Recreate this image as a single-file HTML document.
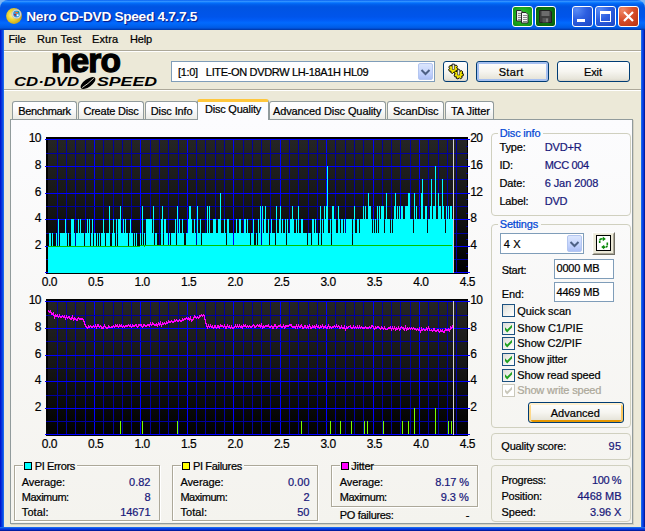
<!DOCTYPE html>
<html><head><meta charset="utf-8"><title>Nero CD-DVD Speed 4.7.7.5</title>
<style>
html,body{margin:0;padding:0;}
body{width:645px;height:531px;overflow:hidden;position:relative;background:#0831d9;font-family:"Liberation Sans",sans-serif;font-size:11px;color:#000;}
.abs,.chart,.al,.t,.gb,.btn,.cb,.tab{position:absolute;}
#title{position:absolute;left:0;top:0;width:645px;height:30px;border-radius:8px 8px 0 0;
 background:linear-gradient(to bottom,#0058ee 0%,#3593ff 4%,#288eff 6%,#127dff 8%,#036ffc 10%,#0262ee 14%,#0057e5 20%,#0054e3 24%,#0055eb 56%,#005bf5 66%,#026afe 76%,#0062ef 86%,#0058e2 93%,#0046c4 96.5%,#0034a0 100%);}
#corner-l,#corner-r{position:absolute;top:0;width:8px;height:8px;background:#7db5f3;}
#ttext{position:absolute;left:26.3px;top:9.2px;line-height:16px;color:#fff;font-weight:bold;font-size:13.7px;letter-spacing:-0.32px;text-shadow:1px 1px 1px #0a1883;white-space:nowrap;}
#frame{position:absolute;left:0;top:30px;width:645px;height:501px;
 background:linear-gradient(to right,#0019cf 0,#0019cf 1px,#0831d9 1px,#0831d9 2px,#0a48e2 2px,#0a48e2 3px,#1a68ee 3px,#1a68ee 4px,transparent 4px,transparent 641px,#1a68ee 641px,#1a68ee 642px,#0a48e2 642px,#0a48e2 643px,#0831d9 643px,#0831d9 644px,#001ea0 644px,#001ea0 645px);}
#fbot{position:absolute;left:0;top:527px;width:645px;height:4px;background:linear-gradient(to bottom,#1a68ee 0,#1a68ee 1px,#0a48e2 1px,#0a48e2 2px,#0831d9 2px,#0831d9 3px,#001ea0 3px,#001ea0 4px);}
#client{position:absolute;left:4px;top:30px;width:637px;height:497px;background:#ece9d8;}
.menu{position:absolute;top:33px;white-space:nowrap;}
.sepd{position:absolute;left:4px;width:637px;height:1px;background:#aca899;}
.sepl{position:absolute;left:4px;width:637px;height:1px;background:#fff;}
.tab{top:101px;height:18px;border:1px solid #919b9c;border-bottom:none;border-radius:3px 3px 0 0;background:linear-gradient(to bottom,#fff 0,#fcfcfe 40%,#ebebe5 100%);box-sizing:border-box;text-align:center;line-height:17px;white-space:nowrap;}
.tab.act{top:99px;height:21px;background:#fcfcfe;border-top:3px solid #ffc73c;line-height:15px;z-index:3;border-color:#919b9c;border-top-color:#ffc73c;}
#page{position:absolute;left:10px;top:119px;width:623px;height:405px;box-sizing:border-box;border:1px solid #919b9c;box-shadow:1px 1px 0 #d4d1c2;background:linear-gradient(to bottom,#fcfcfe 0,#f4f3ee 100%);}
.chart{display:block;}
.cbtn{top:6px;width:21px;height:21px;box-sizing:border-box;border:1px solid #fff;border-radius:3px;overflow:hidden;}
.al{white-space:nowrap;font-size:12px;line-height:13px;letter-spacing:-0.5px;-webkit-text-stroke:0.2px currentColor;}
.al.xl{width:30px;text-align:center;}
.gb{border:1px solid #d0d0bf;border-radius:4px;box-sizing:border-box;}
.gt{position:absolute;color:#0046d5;white-space:nowrap;line-height:13px;padding:0 2px;background:#f8f7f3;}
.t{white-space:nowrap;line-height:13px;-webkit-text-stroke:0.22px currentColor;}
.v{color:#18187a;}
.gtx{color:#0046d5;}
.z4{z-index:4;}
.dis{color:#aca899;}
.gbc{position:absolute;box-sizing:border-box;border:1px solid #aca899;box-shadow:1px 1px 0 #fff, inset 1px 1px 0 #fff;}
.r{text-align:right;}
.btn{box-sizing:border-box;border:1px solid #003c74;border-radius:3px;background:linear-gradient(to bottom,#fff 0,#f6f5f0 50%,#e6e4d9 90%,#d6d0c5 100%);text-align:center;white-space:nowrap;}
.edit{position:absolute;box-sizing:border-box;border:1px solid #7f9db9;background:#fff;white-space:nowrap;}
.dd{position:absolute;width:15px;box-sizing:border-box;border:1px solid #b4c6f0;border-radius:2px;background:linear-gradient(to bottom,#dbe6fd 0,#c3d3fd 60%,#adc0f5 100%);}
.chk{position:absolute;width:13px;height:13px;box-sizing:border-box;border:1px solid #1c5180;background:linear-gradient(135deg,#dcdcd7 0,#fff 100%);}
</style></head><body>
<div id="frame"></div>
<div id="fbot"></div>
<div id="client"></div>
<div id="corner-l" style="left:0"></div><div id="corner-r" style="right:0"></div>
<div id="title"></div>
<svg class="abs" style="left:5px;top:7px" width="18" height="18" viewBox="0 0 18 18">
<defs><radialGradient id="cdg" cx="0.4" cy="0.45" r="0.6"><stop offset="0" stop-color="#fff6a8"/><stop offset="0.45" stop-color="#f0d838"/><stop offset="1" stop-color="#c9a516"/></radialGradient></defs>
<circle cx="9" cy="9" r="7.9" fill="url(#cdg)"/>
<circle cx="11.5" cy="7" r="4.6" fill="#e8e8e8" stroke="#b8b8b8" stroke-width="0.8"/>
<circle cx="11.5" cy="7" r="3.4" fill="#2f9be0"/>
<path d="M9.3 4.8 L12 7 L13.6 5.2 Z" fill="#ff6a2a"/><path d="M8.6 7.2 L10.4 9.4 L11 7 Z" fill="#c41818"/>
<path d="M12.4 4.2 L14.2 4.8 L13.4 6 Z" fill="#1f9a2c"/><circle cx="12.7" cy="8.3" r="1" fill="#fff"/>
</svg>
<div class="abs cbtn" style="left:512px;background:radial-gradient(circle at 50% 45%,#35c935 0,#1ea81e 55%,#0c8a10 100%)"><svg width="19" height="19" viewBox="0 0 19 19" style="position:absolute;left:0;top:0">
<path d="M3.5 3.5 H8 L10 5.5 V14 H3.5 Z" fill="#e6e6e6" stroke="#2a2a2a"/><path d="M5 6.5H9M5 8.5H9M5 10.5H9M5 12.5H9" stroke="#8a8a8a" stroke-width="1"/>
<path d="M8.5 5.5 H13 L15 7.5 V16 H8.5 Z" fill="#f4f4f4" stroke="#2a2a2a"/><path d="M10 8.5H14M10 10.5H14M10 12.5H14M10 14.5H14" stroke="#8a8a8a" stroke-width="1"/>
</svg></div>
<div class="abs cbtn" style="left:535px;background:radial-gradient(circle at 50% 45%,#0f8a12 0,#0b7410 55%,#075a0a 100%)"><svg width="19" height="19" viewBox="0 0 19 19" style="position:absolute;left:0;top:0">
<path d="M3.5 3.5 H14 L15.5 5 V15.5 H3.5 Z" fill="#3c3c3c" stroke="#222"/><rect x="5.5" y="4" width="8" height="5" fill="#6c6c6c"/><rect x="6.5" y="11" width="6" height="4.5" fill="#555"/><rect x="10" y="11.5" width="2" height="3.5" fill="#7a7a7a"/>
</svg></div>
<div class="abs cbtn" style="left:572px;background:radial-gradient(circle at 20% 15%,#5a8cf5 0,#2c5ee0 45%,#1c46c4 100%)"><div style="position:absolute;left:4px;top:12px;width:8px;height:3px;background:#fff"></div></div>
<div class="abs cbtn" style="left:595px;background:radial-gradient(circle at 20% 15%,#5a8cf5 0,#2c5ee0 45%,#1c46c4 100%)"><div style="position:absolute;left:4px;top:4px;width:11px;height:11px;box-sizing:border-box;border:1px solid #fff;border-top-width:3px"></div></div>
<div class="abs cbtn" style="left:618px;background:radial-gradient(circle at 20% 15%,#f08a68 0,#d9502c 45%,#b8300e 100%)"><svg width="19" height="19" viewBox="0 0 19 19" style="position:absolute;left:0;top:0"><path d="M5 5 L14 14 M14 5 L5 14" stroke="#fff" stroke-width="2.2"/></svg></div>

<div id="ttext">Nero CD-DVD Speed 4.7.7.5</div>

<div class="sepd" style="top:50px"></div><div class="sepl" style="top:51px"></div>
<div class="sepd" style="top:89px"></div><div class="sepl" style="top:90px"></div>

<div class="abs" id="nero" style="left:51px;top:39.8px;font-weight:bold;font-size:33.5px;line-height:42px;letter-spacing:-0.9px;color:#000;-webkit-text-stroke:1.3px #000;white-space:nowrap;transform-origin:0 0;transform:scaleX(1.0)">nero</div>
<div class="abs" id="cddvd" style="left:14px;top:75px;font-weight:bold;font-style:italic;font-size:12.3px;line-height:14px;color:#000;white-space:nowrap;transform-origin:0 0;transform:scaleX(1.36)">CD·DVD</div>
<svg class="abs" style="left:79px;top:76px" width="18" height="14" viewBox="0 0 18 14"><ellipse cx="9" cy="7" rx="8.6" ry="3.9" transform="rotate(-35 9 7)" fill="#000"/><path d="M3.2 11.6 Q9 8 14.8 2.2" stroke="#ece9d8" stroke-width="0.9" fill="none"/></svg>
<div class="abs" id="speed" style="left:96.5px;top:75px;font-weight:bold;font-style:italic;font-size:12.3px;line-height:14px;color:#000;white-space:nowrap;transform-origin:0 0;transform:scaleX(1.44)">SPEED</div>


<div class="edit" style="left:171px;top:61px;width:264px;height:21px;"></div>
<div class="dd" style="left:418px;top:63px;width:15px;height:17px"><svg width="13" height="15" viewBox="0 0 13 15" style="position:absolute;left:0;top:0"><path d="M2.5 6 L6.5 10 L10.5 6" fill="none" stroke="#4d6185" stroke-width="2"/></svg></div>
<div class="btn" style="left:443px;top:61px;width:25px;height:21px"><svg width="23" height="19" viewBox="0 0 23 19" style="position:absolute;left:0;top:0">
<g transform="translate(9.2,7) scale(0.92)"><path d="M-1.2 -5.2 L1.2 -5.2 L1.6 -3.6 L3.2 -4.4 L4.6 -2.8 L3.6 -1.4 L5.2 -0.8 L5 1.4 L3.4 1.6 L3.8 3.4 L2 4.6 L0.8 3.4 L-0.6 4.8 L-2.6 4 L-2.4 2.4 L-4.2 2.4 L-5 0.4 L-3.6 -0.6 L-4.8 -2 L-3.6 -3.8 L-2 -3.2 Z" fill="#f2e300" stroke="#000" stroke-width="1"/><rect x="-1" y="-5.2" width="2.2" height="5.6" fill="#e8e8e8" stroke="#333" stroke-width="0.7"/></g>
<g transform="translate(14.6,12.6) scale(0.92)"><path d="M-1.2 -5.2 L1.2 -5.2 L1.6 -3.6 L3.2 -4.4 L4.6 -2.8 L3.6 -1.4 L5.2 -0.8 L5 1.4 L3.4 1.6 L3.8 3.4 L2 4.6 L0.8 3.4 L-0.6 4.8 L-2.6 4 L-2.4 2.4 L-4.2 2.4 L-5 0.4 L-3.6 -0.6 L-4.8 -2 L-3.6 -3.8 L-2 -3.2 Z" fill="#f2e300" stroke="#000" stroke-width="1"/><rect x="-1" y="-5.2" width="2.2" height="5.6" fill="#e8e8e8" stroke="#333" stroke-width="0.7"/></g>
</svg></div>
<div class="btn" style="left:476px;top:61px;width:73px;height:21px;line-height:19px;box-shadow:inset 0 0 0 2px #a6c0f0"></div>
<div class="btn" style="left:557px;top:61px;width:73px;height:21px;line-height:19px"></div>

<div id="page"></div>
<div class="tab" style="left:12px;width:65px"></div>
<div class="tab" style="left:78px;width:66px"></div>
<div class="tab" style="left:145px;width:53px"></div>
<div class="tab" style="left:269px;width:117px"></div>
<div class="tab" style="left:387px;width:57px"></div>
<div class="tab" style="left:445px;width:49px"></div>
<div class="tab act" style="left:197px;width:72px"></div>

<svg class="chart" style="left:44px;top:137px" width="426" height="137" viewBox="44 137 426 137" shape-rendering="crispEdges">
<defs><linearGradient id="gpie" x1="0" y1="0" x2="0" y2="1"><stop offset="0" stop-color="#252525"/><stop offset="0.5" stop-color="#151515"/><stop offset="1" stop-color="#000"/></linearGradient></defs>
<rect x="46" y="137" width="422" height="137" fill="#000"/>
<rect x="48" y="139" width="419" height="134" fill="url(#gpie)"/>
<rect x="57" y="139" width="1" height="134" fill="#0000a0"/>
<rect x="66" y="139" width="1" height="134" fill="#0000a0"/>
<rect x="75" y="139" width="1" height="134" fill="#0000a0"/>
<rect x="85" y="139" width="1" height="134" fill="#0000a0"/>
<rect x="94" y="139" width="1" height="134" fill="#0000ff"/>
<rect x="103" y="139" width="1" height="134" fill="#0000a0"/>
<rect x="113" y="139" width="1" height="134" fill="#0000a0"/>
<rect x="122" y="139" width="1" height="134" fill="#0000a0"/>
<rect x="131" y="139" width="1" height="134" fill="#0000a0"/>
<rect x="140" y="139" width="1" height="134" fill="#0000ff"/>
<rect x="150" y="139" width="1" height="134" fill="#0000a0"/>
<rect x="159" y="139" width="1" height="134" fill="#0000a0"/>
<rect x="168" y="139" width="1" height="134" fill="#0000a0"/>
<rect x="178" y="139" width="1" height="134" fill="#0000a0"/>
<rect x="187" y="139" width="1" height="134" fill="#0000ff"/>
<rect x="196" y="139" width="1" height="134" fill="#0000a0"/>
<rect x="205" y="139" width="1" height="134" fill="#0000a0"/>
<rect x="215" y="139" width="1" height="134" fill="#0000a0"/>
<rect x="224" y="139" width="1" height="134" fill="#0000a0"/>
<rect x="233" y="139" width="1" height="134" fill="#0000ff"/>
<rect x="243" y="139" width="1" height="134" fill="#0000a0"/>
<rect x="252" y="139" width="1" height="134" fill="#0000a0"/>
<rect x="261" y="139" width="1" height="134" fill="#0000a0"/>
<rect x="270" y="139" width="1" height="134" fill="#0000a0"/>
<rect x="280" y="139" width="1" height="134" fill="#0000ff"/>
<rect x="289" y="139" width="1" height="134" fill="#0000a0"/>
<rect x="298" y="139" width="1" height="134" fill="#0000a0"/>
<rect x="308" y="139" width="1" height="134" fill="#0000a0"/>
<rect x="317" y="139" width="1" height="134" fill="#0000a0"/>
<rect x="326" y="139" width="1" height="134" fill="#0000ff"/>
<rect x="335" y="139" width="1" height="134" fill="#0000a0"/>
<rect x="345" y="139" width="1" height="134" fill="#0000a0"/>
<rect x="354" y="139" width="1" height="134" fill="#0000a0"/>
<rect x="363" y="139" width="1" height="134" fill="#0000a0"/>
<rect x="373" y="139" width="1" height="134" fill="#0000ff"/>
<rect x="382" y="139" width="1" height="134" fill="#0000a0"/>
<rect x="391" y="139" width="1" height="134" fill="#0000a0"/>
<rect x="400" y="139" width="1" height="134" fill="#0000a0"/>
<rect x="410" y="139" width="1" height="134" fill="#0000a0"/>
<rect x="419" y="139" width="1" height="134" fill="#0000ff"/>
<rect x="428" y="139" width="1" height="134" fill="#0000a0"/>
<rect x="438" y="139" width="1" height="134" fill="#0000a0"/>
<rect x="447" y="139" width="1" height="134" fill="#0000a0"/>
<rect x="456" y="139" width="1" height="134" fill="#0000a0"/>
<rect x="45" y="272" width="425" height="1" fill="#0000ff"/>
<rect x="46" y="259" width="422" height="1" fill="#0000a0"/>
<rect x="45" y="246" width="425" height="1" fill="#0000ff"/>
<rect x="46" y="233" width="422" height="1" fill="#0000a0"/>
<rect x="45" y="219" width="425" height="1" fill="#0000ff"/>
<rect x="46" y="206" width="422" height="1" fill="#0000a0"/>
<rect x="45" y="193" width="425" height="1" fill="#0000ff"/>
<rect x="46" y="179" width="422" height="1" fill="#0000a0"/>
<rect x="45" y="166" width="425" height="1" fill="#0000ff"/>
<rect x="46" y="153" width="422" height="1" fill="#0000a0"/>
<rect x="45" y="139" width="425" height="1" fill="#0000ff"/>
<rect x="466" y="266" width="2" height="1" fill="#0000a0"/>
<rect x="466" y="253" width="2" height="1" fill="#0000a0"/>
<rect x="466" y="239" width="2" height="1" fill="#0000a0"/>
<rect x="466" y="226" width="2" height="1" fill="#0000a0"/>
<rect x="466" y="213" width="2" height="1" fill="#0000a0"/>
<rect x="466" y="199" width="2" height="1" fill="#0000a0"/>
<rect x="466" y="186" width="2" height="1" fill="#0000a0"/>
<rect x="466" y="173" width="2" height="1" fill="#0000a0"/>
<rect x="466" y="159" width="2" height="1" fill="#0000a0"/>
<rect x="466" y="146" width="2" height="1" fill="#0000a0"/>
<rect x="48" y="246" width="405" height="27" fill="#00ffff"/>
<rect x="49" y="233" width="2" height="13" fill="#00ffff"/>
<rect x="52" y="233" width="1" height="13" fill="#00ffff"/>
<rect x="56" y="233" width="1" height="13" fill="#00ffff"/>
<rect x="58" y="219" width="1" height="27" fill="#00ffff"/>
<rect x="60" y="233" width="5" height="13" fill="#00ffff"/>
<rect x="65" y="219" width="1" height="27" fill="#00ffff"/>
<rect x="66" y="233" width="1" height="13" fill="#00ffff"/>
<rect x="68" y="233" width="1" height="13" fill="#00ffff"/>
<rect x="71" y="219" width="3" height="27" fill="#00ffff"/>
<rect x="74" y="233" width="1" height="13" fill="#00ffff"/>
<rect x="76" y="233" width="2" height="13" fill="#00ffff"/>
<rect x="78" y="219" width="1" height="27" fill="#00ffff"/>
<rect x="79" y="233" width="1" height="13" fill="#00ffff"/>
<rect x="80" y="219" width="1" height="27" fill="#00ffff"/>
<rect x="81" y="233" width="3" height="13" fill="#00ffff"/>
<rect x="85" y="233" width="2" height="13" fill="#00ffff"/>
<rect x="87" y="219" width="1" height="27" fill="#00ffff"/>
<rect x="88" y="233" width="1" height="13" fill="#00ffff"/>
<rect x="89" y="219" width="1" height="27" fill="#00ffff"/>
<rect x="91" y="233" width="1" height="13" fill="#00ffff"/>
<rect x="92" y="219" width="1" height="27" fill="#00ffff"/>
<rect x="94" y="233" width="2" height="13" fill="#00ffff"/>
<rect x="97" y="233" width="1" height="13" fill="#00ffff"/>
<rect x="99" y="233" width="1" height="13" fill="#00ffff"/>
<rect x="101" y="233" width="2" height="13" fill="#00ffff"/>
<rect x="103" y="219" width="1" height="27" fill="#00ffff"/>
<rect x="104" y="233" width="1" height="13" fill="#00ffff"/>
<rect x="106" y="233" width="3" height="13" fill="#00ffff"/>
<rect x="109" y="206" width="1" height="40" fill="#00ffff"/>
<rect x="112" y="233" width="1" height="13" fill="#00ffff"/>
<rect x="113" y="219" width="1" height="27" fill="#00ffff"/>
<rect x="114" y="233" width="1" height="13" fill="#00ffff"/>
<rect x="116" y="219" width="1" height="27" fill="#00ffff"/>
<rect x="118" y="219" width="2" height="27" fill="#00ffff"/>
<rect x="120" y="206" width="1" height="40" fill="#00ffff"/>
<rect x="121" y="233" width="2" height="13" fill="#00ffff"/>
<rect x="123" y="219" width="1" height="27" fill="#00ffff"/>
<rect x="124" y="233" width="1" height="13" fill="#00ffff"/>
<rect x="125" y="219" width="1" height="27" fill="#00ffff"/>
<rect x="126" y="233" width="2" height="13" fill="#00ffff"/>
<rect x="129" y="233" width="1" height="13" fill="#00ffff"/>
<rect x="130" y="219" width="1" height="27" fill="#00ffff"/>
<rect x="131" y="233" width="2" height="13" fill="#00ffff"/>
<rect x="134" y="233" width="1" height="13" fill="#00ffff"/>
<rect x="136" y="233" width="1" height="13" fill="#00ffff"/>
<rect x="140" y="233" width="1" height="13" fill="#00ffff"/>
<rect x="142" y="206" width="1" height="40" fill="#00ffff"/>
<rect x="144" y="233" width="1" height="13" fill="#00ffff"/>
<rect x="146" y="219" width="6" height="27" fill="#00ffff"/>
<rect x="152" y="233" width="1" height="13" fill="#00ffff"/>
<rect x="153" y="206" width="1" height="40" fill="#00ffff"/>
<rect x="155" y="233" width="2" height="13" fill="#00ffff"/>
<rect x="161" y="219" width="1" height="27" fill="#00ffff"/>
<rect x="162" y="206" width="1" height="40" fill="#00ffff"/>
<rect x="164" y="219" width="2" height="27" fill="#00ffff"/>
<rect x="166" y="233" width="2" height="13" fill="#00ffff"/>
<rect x="169" y="233" width="1" height="13" fill="#00ffff"/>
<rect x="171" y="233" width="4" height="13" fill="#00ffff"/>
<rect x="175" y="219" width="1" height="27" fill="#00ffff"/>
<rect x="177" y="206" width="1" height="40" fill="#00ffff"/>
<rect x="178" y="233" width="1" height="13" fill="#00ffff"/>
<rect x="179" y="219" width="1" height="27" fill="#00ffff"/>
<rect x="180" y="233" width="2" height="13" fill="#00ffff"/>
<rect x="182" y="219" width="1" height="27" fill="#00ffff"/>
<rect x="183" y="233" width="1" height="13" fill="#00ffff"/>
<rect x="186" y="233" width="2" height="13" fill="#00ffff"/>
<rect x="188" y="219" width="1" height="27" fill="#00ffff"/>
<rect x="189" y="206" width="2" height="40" fill="#00ffff"/>
<rect x="191" y="219" width="1" height="27" fill="#00ffff"/>
<rect x="192" y="233" width="2" height="13" fill="#00ffff"/>
<rect x="194" y="219" width="1" height="27" fill="#00ffff"/>
<rect x="195" y="233" width="1" height="13" fill="#00ffff"/>
<rect x="197" y="206" width="1" height="40" fill="#00ffff"/>
<rect x="198" y="233" width="2" height="13" fill="#00ffff"/>
<rect x="200" y="219" width="1" height="27" fill="#00ffff"/>
<rect x="202" y="233" width="5" height="13" fill="#00ffff"/>
<rect x="207" y="206" width="1" height="40" fill="#00ffff"/>
<rect x="208" y="233" width="1" height="13" fill="#00ffff"/>
<rect x="209" y="206" width="1" height="40" fill="#00ffff"/>
<rect x="210" y="233" width="3" height="13" fill="#00ffff"/>
<rect x="213" y="219" width="3" height="27" fill="#00ffff"/>
<rect x="216" y="233" width="2" height="13" fill="#00ffff"/>
<rect x="218" y="219" width="2" height="27" fill="#00ffff"/>
<rect x="220" y="193" width="1" height="53" fill="#00ffff"/>
<rect x="221" y="233" width="3" height="13" fill="#00ffff"/>
<rect x="224" y="219" width="1" height="27" fill="#00ffff"/>
<rect x="225" y="233" width="1" height="13" fill="#00ffff"/>
<rect x="227" y="219" width="2" height="27" fill="#00ffff"/>
<rect x="229" y="233" width="4" height="13" fill="#00ffff"/>
<rect x="234" y="233" width="2" height="13" fill="#00ffff"/>
<rect x="236" y="219" width="1" height="27" fill="#00ffff"/>
<rect x="237" y="233" width="2" height="13" fill="#00ffff"/>
<rect x="239" y="219" width="2" height="27" fill="#00ffff"/>
<rect x="241" y="233" width="3" height="13" fill="#00ffff"/>
<rect x="244" y="219" width="2" height="27" fill="#00ffff"/>
<rect x="246" y="233" width="1" height="13" fill="#00ffff"/>
<rect x="247" y="219" width="1" height="27" fill="#00ffff"/>
<rect x="248" y="233" width="2" height="13" fill="#00ffff"/>
<rect x="251" y="233" width="2" height="13" fill="#00ffff"/>
<rect x="253" y="219" width="1" height="27" fill="#00ffff"/>
<rect x="256" y="233" width="1" height="13" fill="#00ffff"/>
<rect x="258" y="219" width="1" height="27" fill="#00ffff"/>
<rect x="259" y="233" width="1" height="13" fill="#00ffff"/>
<rect x="260" y="206" width="1" height="40" fill="#00ffff"/>
<rect x="262" y="206" width="1" height="40" fill="#00ffff"/>
<rect x="263" y="233" width="1" height="13" fill="#00ffff"/>
<rect x="264" y="219" width="1" height="27" fill="#00ffff"/>
<rect x="265" y="206" width="1" height="40" fill="#00ffff"/>
<rect x="266" y="233" width="2" height="13" fill="#00ffff"/>
<rect x="268" y="219" width="1" height="27" fill="#00ffff"/>
<rect x="270" y="233" width="1" height="13" fill="#00ffff"/>
<rect x="271" y="219" width="1" height="27" fill="#00ffff"/>
<rect x="272" y="233" width="3" height="13" fill="#00ffff"/>
<rect x="276" y="206" width="1" height="40" fill="#00ffff"/>
<rect x="277" y="233" width="2" height="13" fill="#00ffff"/>
<rect x="279" y="219" width="1" height="27" fill="#00ffff"/>
<rect x="280" y="206" width="1" height="40" fill="#00ffff"/>
<rect x="281" y="233" width="1" height="13" fill="#00ffff"/>
<rect x="282" y="219" width="1" height="27" fill="#00ffff"/>
<rect x="283" y="233" width="2" height="13" fill="#00ffff"/>
<rect x="285" y="219" width="1" height="27" fill="#00ffff"/>
<rect x="287" y="219" width="1" height="27" fill="#00ffff"/>
<rect x="288" y="233" width="2" height="13" fill="#00ffff"/>
<rect x="290" y="219" width="2" height="27" fill="#00ffff"/>
<rect x="292" y="206" width="1" height="40" fill="#00ffff"/>
<rect x="293" y="219" width="1" height="27" fill="#00ffff"/>
<rect x="294" y="233" width="2" height="13" fill="#00ffff"/>
<rect x="296" y="219" width="1" height="27" fill="#00ffff"/>
<rect x="297" y="233" width="1" height="13" fill="#00ffff"/>
<rect x="298" y="206" width="1" height="40" fill="#00ffff"/>
<rect x="299" y="233" width="2" height="13" fill="#00ffff"/>
<rect x="301" y="219" width="2" height="27" fill="#00ffff"/>
<rect x="303" y="233" width="4" height="13" fill="#00ffff"/>
<rect x="308" y="233" width="3" height="13" fill="#00ffff"/>
<rect x="312" y="219" width="2" height="27" fill="#00ffff"/>
<rect x="314" y="233" width="1" height="13" fill="#00ffff"/>
<rect x="315" y="219" width="1" height="27" fill="#00ffff"/>
<rect x="316" y="233" width="2" height="13" fill="#00ffff"/>
<rect x="319" y="233" width="1" height="13" fill="#00ffff"/>
<rect x="320" y="206" width="1" height="40" fill="#00ffff"/>
<rect x="322" y="219" width="1" height="27" fill="#00ffff"/>
<rect x="323" y="233" width="1" height="13" fill="#00ffff"/>
<rect x="324" y="206" width="1" height="40" fill="#00ffff"/>
<rect x="325" y="219" width="1" height="27" fill="#00ffff"/>
<rect x="326" y="206" width="1" height="40" fill="#00ffff"/>
<rect x="327" y="166" width="1" height="80" fill="#00ffff"/>
<rect x="328" y="233" width="2" height="13" fill="#00ffff"/>
<rect x="330" y="219" width="1" height="27" fill="#00ffff"/>
<rect x="332" y="206" width="2" height="40" fill="#00ffff"/>
<rect x="334" y="219" width="2" height="27" fill="#00ffff"/>
<rect x="336" y="233" width="2" height="13" fill="#00ffff"/>
<rect x="338" y="206" width="1" height="40" fill="#00ffff"/>
<rect x="339" y="219" width="1" height="27" fill="#00ffff"/>
<rect x="340" y="233" width="1" height="13" fill="#00ffff"/>
<rect x="341" y="219" width="2" height="27" fill="#00ffff"/>
<rect x="343" y="233" width="1" height="13" fill="#00ffff"/>
<rect x="344" y="219" width="1" height="27" fill="#00ffff"/>
<rect x="345" y="233" width="1" height="13" fill="#00ffff"/>
<rect x="346" y="219" width="6" height="27" fill="#00ffff"/>
<rect x="353" y="219" width="1" height="27" fill="#00ffff"/>
<rect x="354" y="206" width="1" height="40" fill="#00ffff"/>
<rect x="355" y="233" width="2" height="13" fill="#00ffff"/>
<rect x="357" y="219" width="2" height="27" fill="#00ffff"/>
<rect x="359" y="233" width="1" height="13" fill="#00ffff"/>
<rect x="360" y="219" width="3" height="27" fill="#00ffff"/>
<rect x="363" y="206" width="1" height="40" fill="#00ffff"/>
<rect x="364" y="219" width="1" height="27" fill="#00ffff"/>
<rect x="365" y="206" width="1" height="40" fill="#00ffff"/>
<rect x="366" y="219" width="2" height="27" fill="#00ffff"/>
<rect x="368" y="193" width="1" height="53" fill="#00ffff"/>
<rect x="369" y="206" width="2" height="40" fill="#00ffff"/>
<rect x="371" y="219" width="1" height="27" fill="#00ffff"/>
<rect x="372" y="233" width="1" height="13" fill="#00ffff"/>
<rect x="373" y="219" width="1" height="27" fill="#00ffff"/>
<rect x="374" y="233" width="1" height="13" fill="#00ffff"/>
<rect x="375" y="219" width="1" height="27" fill="#00ffff"/>
<rect x="376" y="233" width="1" height="13" fill="#00ffff"/>
<rect x="377" y="206" width="1" height="40" fill="#00ffff"/>
<rect x="378" y="233" width="1" height="13" fill="#00ffff"/>
<rect x="379" y="206" width="1" height="40" fill="#00ffff"/>
<rect x="380" y="219" width="1" height="27" fill="#00ffff"/>
<rect x="381" y="206" width="3" height="40" fill="#00ffff"/>
<rect x="384" y="233" width="1" height="13" fill="#00ffff"/>
<rect x="385" y="219" width="1" height="27" fill="#00ffff"/>
<rect x="386" y="193" width="1" height="53" fill="#00ffff"/>
<rect x="387" y="219" width="3" height="27" fill="#00ffff"/>
<rect x="390" y="233" width="1" height="13" fill="#00ffff"/>
<rect x="391" y="219" width="1" height="27" fill="#00ffff"/>
<rect x="392" y="233" width="1" height="13" fill="#00ffff"/>
<rect x="393" y="219" width="1" height="27" fill="#00ffff"/>
<rect x="394" y="206" width="1" height="40" fill="#00ffff"/>
<rect x="395" y="193" width="1" height="53" fill="#00ffff"/>
<rect x="396" y="219" width="1" height="27" fill="#00ffff"/>
<rect x="397" y="206" width="1" height="40" fill="#00ffff"/>
<rect x="398" y="219" width="1" height="27" fill="#00ffff"/>
<rect x="399" y="206" width="1" height="40" fill="#00ffff"/>
<rect x="400" y="219" width="1" height="27" fill="#00ffff"/>
<rect x="401" y="206" width="2" height="40" fill="#00ffff"/>
<rect x="403" y="219" width="2" height="27" fill="#00ffff"/>
<rect x="405" y="206" width="3" height="40" fill="#00ffff"/>
<rect x="408" y="193" width="2" height="53" fill="#00ffff"/>
<rect x="410" y="219" width="3" height="27" fill="#00ffff"/>
<rect x="413" y="233" width="1" height="13" fill="#00ffff"/>
<rect x="414" y="193" width="1" height="53" fill="#00ffff"/>
<rect x="415" y="219" width="1" height="27" fill="#00ffff"/>
<rect x="416" y="206" width="1" height="40" fill="#00ffff"/>
<rect x="417" y="219" width="4" height="27" fill="#00ffff"/>
<rect x="421" y="193" width="1" height="53" fill="#00ffff"/>
<rect x="422" y="179" width="1" height="67" fill="#00ffff"/>
<rect x="423" y="219" width="2" height="27" fill="#00ffff"/>
<rect x="425" y="206" width="2" height="40" fill="#00ffff"/>
<rect x="427" y="233" width="1" height="13" fill="#00ffff"/>
<rect x="428" y="219" width="2" height="27" fill="#00ffff"/>
<rect x="430" y="206" width="1" height="40" fill="#00ffff"/>
<rect x="431" y="179" width="1" height="67" fill="#00ffff"/>
<rect x="432" y="219" width="1" height="27" fill="#00ffff"/>
<rect x="433" y="206" width="2" height="40" fill="#00ffff"/>
<rect x="435" y="166" width="1" height="80" fill="#00ffff"/>
<rect x="436" y="219" width="2" height="27" fill="#00ffff"/>
<rect x="438" y="193" width="1" height="53" fill="#00ffff"/>
<rect x="439" y="206" width="2" height="40" fill="#00ffff"/>
<rect x="441" y="219" width="1" height="27" fill="#00ffff"/>
<rect x="442" y="179" width="1" height="67" fill="#00ffff"/>
<rect x="443" y="206" width="1" height="40" fill="#00ffff"/>
<rect x="444" y="219" width="1" height="27" fill="#00ffff"/>
<rect x="445" y="233" width="1" height="13" fill="#00ffff"/>
<rect x="446" y="206" width="1" height="40" fill="#00ffff"/>
<rect x="447" y="219" width="1" height="27" fill="#00ffff"/>
<rect x="448" y="206" width="1" height="40" fill="#00ffff"/>
<rect x="449" y="219" width="1" height="27" fill="#00ffff"/>
<rect x="450" y="206" width="2" height="40" fill="#00ffff"/>
<rect x="452" y="219" width="1" height="27" fill="#00ffff"/>
<rect x="48" y="246" width="92" height="1" fill="#00c400"/>
<rect x="140" y="245" width="312" height="1" fill="#00c400"/>
<rect x="144" y="246" width="1" height="1" fill="#00c400"/>
<rect x="453" y="139" width="1" height="134" fill="#d4d0d0"/>
</svg>
<div class="al" style="right:604.0px;top:238.8px">2</div>
<div class="al" style="right:604.0px;top:211.8px">4</div>
<div class="al" style="right:604.0px;top:185.8px">6</div>
<div class="al" style="right:604.0px;top:158.8px">8</div>
<div class="al" style="right:604.0px;top:131.8px">10</div>
<div class="al" style="left:470.2px;top:238.8px">4</div>
<div class="al" style="left:470.2px;top:211.8px">8</div>
<div class="al" style="left:470.2px;top:185.8px">12</div>
<div class="al" style="left:470.2px;top:158.8px">16</div>
<div class="al" style="left:470.2px;top:131.8px">20</div>
<div class="al xl" style="left:34.3px;top:275.6px">0.0</div>
<div class="al xl" style="left:80.7px;top:275.6px">0.5</div>
<div class="al xl" style="left:127.2px;top:275.6px">1.0</div>
<div class="al xl" style="left:173.6px;top:275.6px">1.5</div>
<div class="al xl" style="left:220.1px;top:275.6px">2.0</div>
<div class="al xl" style="left:266.5px;top:275.6px">2.5</div>
<div class="al xl" style="left:313.0px;top:275.6px">3.0</div>
<div class="al xl" style="left:359.4px;top:275.6px">3.5</div>
<div class="al xl" style="left:405.9px;top:275.6px">4.0</div>
<div class="al xl" style="left:452.3px;top:275.6px">4.5</div>
<svg class="chart" style="left:44px;top:299px" width="426" height="137" viewBox="44 299 426 137" shape-rendering="crispEdges">
<defs><linearGradient id="gpif" x1="0" y1="0" x2="0" y2="1"><stop offset="0" stop-color="#252525"/><stop offset="0.5" stop-color="#151515"/><stop offset="1" stop-color="#000"/></linearGradient></defs>
<rect x="46" y="299" width="422" height="137" fill="#000"/>
<rect x="48" y="301" width="419" height="134" fill="url(#gpif)"/>
<rect x="57" y="301" width="1" height="134" fill="#0000a0"/>
<rect x="66" y="301" width="1" height="134" fill="#0000a0"/>
<rect x="75" y="301" width="1" height="134" fill="#0000a0"/>
<rect x="85" y="301" width="1" height="134" fill="#0000a0"/>
<rect x="94" y="301" width="1" height="134" fill="#0000ff"/>
<rect x="103" y="301" width="1" height="134" fill="#0000a0"/>
<rect x="113" y="301" width="1" height="134" fill="#0000a0"/>
<rect x="122" y="301" width="1" height="134" fill="#0000a0"/>
<rect x="131" y="301" width="1" height="134" fill="#0000a0"/>
<rect x="140" y="301" width="1" height="134" fill="#0000ff"/>
<rect x="150" y="301" width="1" height="134" fill="#0000a0"/>
<rect x="159" y="301" width="1" height="134" fill="#0000a0"/>
<rect x="168" y="301" width="1" height="134" fill="#0000a0"/>
<rect x="178" y="301" width="1" height="134" fill="#0000a0"/>
<rect x="187" y="301" width="1" height="134" fill="#0000ff"/>
<rect x="196" y="301" width="1" height="134" fill="#0000a0"/>
<rect x="205" y="301" width="1" height="134" fill="#0000a0"/>
<rect x="215" y="301" width="1" height="134" fill="#0000a0"/>
<rect x="224" y="301" width="1" height="134" fill="#0000a0"/>
<rect x="233" y="301" width="1" height="134" fill="#0000ff"/>
<rect x="243" y="301" width="1" height="134" fill="#0000a0"/>
<rect x="252" y="301" width="1" height="134" fill="#0000a0"/>
<rect x="261" y="301" width="1" height="134" fill="#0000a0"/>
<rect x="270" y="301" width="1" height="134" fill="#0000a0"/>
<rect x="280" y="301" width="1" height="134" fill="#0000ff"/>
<rect x="289" y="301" width="1" height="134" fill="#0000a0"/>
<rect x="298" y="301" width="1" height="134" fill="#0000a0"/>
<rect x="308" y="301" width="1" height="134" fill="#0000a0"/>
<rect x="317" y="301" width="1" height="134" fill="#0000a0"/>
<rect x="326" y="301" width="1" height="134" fill="#0000ff"/>
<rect x="335" y="301" width="1" height="134" fill="#0000a0"/>
<rect x="345" y="301" width="1" height="134" fill="#0000a0"/>
<rect x="354" y="301" width="1" height="134" fill="#0000a0"/>
<rect x="363" y="301" width="1" height="134" fill="#0000a0"/>
<rect x="373" y="301" width="1" height="134" fill="#0000ff"/>
<rect x="382" y="301" width="1" height="134" fill="#0000a0"/>
<rect x="391" y="301" width="1" height="134" fill="#0000a0"/>
<rect x="400" y="301" width="1" height="134" fill="#0000a0"/>
<rect x="410" y="301" width="1" height="134" fill="#0000a0"/>
<rect x="419" y="301" width="1" height="134" fill="#0000ff"/>
<rect x="428" y="301" width="1" height="134" fill="#0000a0"/>
<rect x="438" y="301" width="1" height="134" fill="#0000a0"/>
<rect x="447" y="301" width="1" height="134" fill="#0000a0"/>
<rect x="456" y="301" width="1" height="134" fill="#0000a0"/>
<rect x="45" y="434" width="425" height="1" fill="#0000ff"/>
<rect x="46" y="421" width="422" height="1" fill="#0000a0"/>
<rect x="45" y="408" width="425" height="1" fill="#0000ff"/>
<rect x="46" y="395" width="422" height="1" fill="#0000a0"/>
<rect x="45" y="381" width="425" height="1" fill="#0000ff"/>
<rect x="46" y="368" width="422" height="1" fill="#0000a0"/>
<rect x="45" y="355" width="425" height="1" fill="#0000ff"/>
<rect x="46" y="341" width="422" height="1" fill="#0000a0"/>
<rect x="45" y="328" width="425" height="1" fill="#0000ff"/>
<rect x="46" y="315" width="422" height="1" fill="#0000a0"/>
<rect x="45" y="301" width="425" height="1" fill="#0000ff"/>
<rect x="120" y="421" width="1" height="13" fill="#78ff00"/>
<rect x="142" y="421" width="1" height="13" fill="#78ff00"/>
<rect x="177" y="421" width="1" height="13" fill="#78ff00"/>
<rect x="301" y="421" width="1" height="13" fill="#78ff00"/>
<rect x="330" y="421" width="1" height="13" fill="#78ff00"/>
<rect x="340" y="421" width="1" height="13" fill="#78ff00"/>
<rect x="351" y="421" width="1" height="13" fill="#78ff00"/>
<rect x="364" y="421" width="1" height="13" fill="#78ff00"/>
<rect x="367" y="421" width="1" height="13" fill="#78ff00"/>
<rect x="383" y="421" width="1" height="13" fill="#78ff00"/>
<rect x="402" y="421" width="1" height="13" fill="#78ff00"/>
<rect x="408" y="421" width="1" height="13" fill="#78ff00"/>
<rect x="414" y="408" width="1" height="26" fill="#78ff00"/>
<rect x="435" y="408" width="1" height="26" fill="#78ff00"/>
<rect x="448" y="421" width="1" height="13" fill="#78ff00"/>
<rect x="451" y="421" width="1" height="13" fill="#78ff00"/>
<rect x="48" y="310" width="1" height="2" fill="#ff00ff"/>
<rect x="49" y="311" width="1" height="2" fill="#ff00ff"/>
<rect x="50" y="310" width="1" height="3" fill="#ff00ff"/>
<rect x="51" y="312" width="1" height="3" fill="#ff00ff"/>
<rect x="52" y="313" width="1" height="2" fill="#ff00ff"/>
<rect x="53" y="312" width="1" height="4" fill="#ff00ff"/>
<rect x="54" y="315" width="1" height="4" fill="#ff00ff"/>
<rect x="55" y="314" width="1" height="3" fill="#ff00ff"/>
<rect x="56" y="315" width="1" height="2" fill="#ff00ff"/>
<rect x="57" y="314" width="1" height="3" fill="#ff00ff"/>
<rect x="58" y="316" width="1" height="2" fill="#ff00ff"/>
<rect x="59" y="314" width="1" height="3" fill="#ff00ff"/>
<rect x="60" y="316" width="1" height="2" fill="#ff00ff"/>
<rect x="61" y="316" width="1" height="2" fill="#ff00ff"/>
<rect x="62" y="315" width="1" height="2" fill="#ff00ff"/>
<rect x="63" y="316" width="1" height="2" fill="#ff00ff"/>
<rect x="64" y="315" width="1" height="3" fill="#ff00ff"/>
<rect x="65" y="317" width="1" height="3" fill="#ff00ff"/>
<rect x="66" y="315" width="1" height="3" fill="#ff00ff"/>
<rect x="67" y="317" width="1" height="2" fill="#ff00ff"/>
<rect x="68" y="316" width="1" height="2" fill="#ff00ff"/>
<rect x="69" y="316" width="1" height="3" fill="#ff00ff"/>
<rect x="70" y="318" width="1" height="2" fill="#ff00ff"/>
<rect x="71" y="317" width="1" height="3" fill="#ff00ff"/>
<rect x="72" y="315" width="1" height="4" fill="#ff00ff"/>
<rect x="73" y="318" width="1" height="3" fill="#ff00ff"/>
<rect x="74" y="317" width="1" height="3" fill="#ff00ff"/>
<rect x="75" y="318" width="1" height="2" fill="#ff00ff"/>
<rect x="76" y="319" width="1" height="2" fill="#ff00ff"/>
<rect x="77" y="318" width="1" height="3" fill="#ff00ff"/>
<rect x="78" y="317" width="1" height="2" fill="#ff00ff"/>
<rect x="79" y="318" width="1" height="2" fill="#ff00ff"/>
<rect x="80" y="318" width="1" height="2" fill="#ff00ff"/>
<rect x="81" y="318" width="1" height="2" fill="#ff00ff"/>
<rect x="82" y="318" width="1" height="2" fill="#ff00ff"/>
<rect x="83" y="319" width="1" height="3" fill="#ff00ff"/>
<rect x="84" y="321" width="1" height="4" fill="#ff00ff"/>
<rect x="85" y="324" width="1" height="3" fill="#ff00ff"/>
<rect x="86" y="326" width="1" height="2" fill="#ff00ff"/>
<rect x="87" y="327" width="1" height="2" fill="#ff00ff"/>
<rect x="88" y="325" width="1" height="3" fill="#ff00ff"/>
<rect x="89" y="326" width="1" height="2" fill="#ff00ff"/>
<rect x="90" y="325" width="1" height="2" fill="#ff00ff"/>
<rect x="91" y="326" width="1" height="2" fill="#ff00ff"/>
<rect x="92" y="326" width="1" height="2" fill="#ff00ff"/>
<rect x="93" y="325" width="1" height="2" fill="#ff00ff"/>
<rect x="94" y="326" width="1" height="2" fill="#ff00ff"/>
<rect x="95" y="324" width="1" height="3" fill="#ff00ff"/>
<rect x="96" y="326" width="1" height="3" fill="#ff00ff"/>
<rect x="97" y="324" width="1" height="3" fill="#ff00ff"/>
<rect x="98" y="324" width="1" height="3" fill="#ff00ff"/>
<rect x="99" y="326" width="1" height="2" fill="#ff00ff"/>
<rect x="100" y="325" width="1" height="2" fill="#ff00ff"/>
<rect x="101" y="326" width="1" height="3" fill="#ff00ff"/>
<rect x="102" y="327" width="1" height="2" fill="#ff00ff"/>
<rect x="103" y="326" width="1" height="3" fill="#ff00ff"/>
<rect x="104" y="324" width="1" height="3" fill="#ff00ff"/>
<rect x="105" y="326" width="1" height="2" fill="#ff00ff"/>
<rect x="106" y="327" width="1" height="2" fill="#ff00ff"/>
<rect x="107" y="327" width="1" height="2" fill="#ff00ff"/>
<rect x="108" y="325" width="1" height="3" fill="#ff00ff"/>
<rect x="109" y="326" width="1" height="2" fill="#ff00ff"/>
<rect x="110" y="327" width="1" height="1" fill="#ff00ff"/>
<rect x="111" y="326" width="1" height="2" fill="#ff00ff"/>
<rect x="112" y="326" width="1" height="2" fill="#ff00ff"/>
<rect x="113" y="325" width="1" height="2" fill="#ff00ff"/>
<rect x="114" y="326" width="1" height="2" fill="#ff00ff"/>
<rect x="115" y="324" width="1" height="3" fill="#ff00ff"/>
<rect x="116" y="325" width="1" height="2" fill="#ff00ff"/>
<rect x="117" y="324" width="1" height="3" fill="#ff00ff"/>
<rect x="118" y="326" width="1" height="2" fill="#ff00ff"/>
<rect x="119" y="324" width="1" height="3" fill="#ff00ff"/>
<rect x="120" y="325" width="1" height="2" fill="#ff00ff"/>
<rect x="121" y="324" width="1" height="3" fill="#ff00ff"/>
<rect x="122" y="326" width="1" height="2" fill="#ff00ff"/>
<rect x="123" y="325" width="1" height="2" fill="#ff00ff"/>
<rect x="124" y="326" width="1" height="2" fill="#ff00ff"/>
<rect x="125" y="325" width="1" height="2" fill="#ff00ff"/>
<rect x="126" y="325" width="1" height="2" fill="#ff00ff"/>
<rect x="127" y="325" width="1" height="2" fill="#ff00ff"/>
<rect x="128" y="324" width="1" height="2" fill="#ff00ff"/>
<rect x="129" y="325" width="1" height="2" fill="#ff00ff"/>
<rect x="130" y="324" width="1" height="3" fill="#ff00ff"/>
<rect x="131" y="326" width="1" height="2" fill="#ff00ff"/>
<rect x="132" y="324" width="1" height="3" fill="#ff00ff"/>
<rect x="133" y="325" width="1" height="2" fill="#ff00ff"/>
<rect x="134" y="325" width="1" height="2" fill="#ff00ff"/>
<rect x="135" y="324" width="1" height="2" fill="#ff00ff"/>
<rect x="136" y="324" width="1" height="3" fill="#ff00ff"/>
<rect x="137" y="326" width="1" height="2" fill="#ff00ff"/>
<rect x="138" y="324" width="1" height="3" fill="#ff00ff"/>
<rect x="139" y="324" width="1" height="2" fill="#ff00ff"/>
<rect x="140" y="324" width="1" height="2" fill="#ff00ff"/>
<rect x="141" y="324" width="1" height="3" fill="#ff00ff"/>
<rect x="142" y="326" width="1" height="2" fill="#ff00ff"/>
<rect x="143" y="324" width="1" height="3" fill="#ff00ff"/>
<rect x="144" y="324" width="1" height="2" fill="#ff00ff"/>
<rect x="145" y="325" width="1" height="2" fill="#ff00ff"/>
<rect x="146" y="325" width="1" height="2" fill="#ff00ff"/>
<rect x="147" y="324" width="1" height="2" fill="#ff00ff"/>
<rect x="148" y="324" width="1" height="2" fill="#ff00ff"/>
<rect x="149" y="324" width="1" height="3" fill="#ff00ff"/>
<rect x="150" y="322" width="1" height="3" fill="#ff00ff"/>
<rect x="151" y="324" width="1" height="2" fill="#ff00ff"/>
<rect x="152" y="322" width="1" height="3" fill="#ff00ff"/>
<rect x="153" y="323" width="1" height="2" fill="#ff00ff"/>
<rect x="154" y="324" width="1" height="2" fill="#ff00ff"/>
<rect x="155" y="324" width="1" height="2" fill="#ff00ff"/>
<rect x="156" y="323" width="1" height="3" fill="#ff00ff"/>
<rect x="157" y="324" width="1" height="3" fill="#ff00ff"/>
<rect x="158" y="322" width="1" height="3" fill="#ff00ff"/>
<rect x="159" y="323" width="1" height="3" fill="#ff00ff"/>
<rect x="160" y="321" width="1" height="4" fill="#ff00ff"/>
<rect x="161" y="324" width="1" height="3" fill="#ff00ff"/>
<rect x="162" y="322" width="1" height="3" fill="#ff00ff"/>
<rect x="163" y="323" width="1" height="2" fill="#ff00ff"/>
<rect x="164" y="322" width="1" height="2" fill="#ff00ff"/>
<rect x="165" y="323" width="1" height="2" fill="#ff00ff"/>
<rect x="166" y="321" width="1" height="3" fill="#ff00ff"/>
<rect x="167" y="322" width="1" height="2" fill="#ff00ff"/>
<rect x="168" y="320" width="1" height="3" fill="#ff00ff"/>
<rect x="169" y="321" width="1" height="2" fill="#ff00ff"/>
<rect x="170" y="321" width="1" height="2" fill="#ff00ff"/>
<rect x="171" y="320" width="1" height="2" fill="#ff00ff"/>
<rect x="172" y="321" width="1" height="2" fill="#ff00ff"/>
<rect x="173" y="321" width="1" height="2" fill="#ff00ff"/>
<rect x="174" y="319" width="1" height="3" fill="#ff00ff"/>
<rect x="175" y="320" width="1" height="2" fill="#ff00ff"/>
<rect x="176" y="319" width="1" height="2" fill="#ff00ff"/>
<rect x="177" y="320" width="1" height="2" fill="#ff00ff"/>
<rect x="178" y="320" width="1" height="2" fill="#ff00ff"/>
<rect x="179" y="319" width="1" height="2" fill="#ff00ff"/>
<rect x="180" y="320" width="1" height="2" fill="#ff00ff"/>
<rect x="181" y="320" width="1" height="2" fill="#ff00ff"/>
<rect x="182" y="318" width="1" height="3" fill="#ff00ff"/>
<rect x="183" y="319" width="1" height="2" fill="#ff00ff"/>
<rect x="184" y="318" width="1" height="2" fill="#ff00ff"/>
<rect x="185" y="318" width="1" height="2" fill="#ff00ff"/>
<rect x="186" y="317" width="1" height="2" fill="#ff00ff"/>
<rect x="187" y="318" width="1" height="2" fill="#ff00ff"/>
<rect x="188" y="317" width="1" height="3" fill="#ff00ff"/>
<rect x="189" y="318" width="1" height="3" fill="#ff00ff"/>
<rect x="190" y="316" width="1" height="4" fill="#ff00ff"/>
<rect x="191" y="319" width="1" height="3" fill="#ff00ff"/>
<rect x="192" y="319" width="1" height="2" fill="#ff00ff"/>
<rect x="193" y="317" width="1" height="3" fill="#ff00ff"/>
<rect x="194" y="315" width="1" height="3" fill="#ff00ff"/>
<rect x="195" y="316" width="1" height="2" fill="#ff00ff"/>
<rect x="196" y="317" width="1" height="2" fill="#ff00ff"/>
<rect x="197" y="316" width="1" height="2" fill="#ff00ff"/>
<rect x="198" y="317" width="1" height="2" fill="#ff00ff"/>
<rect x="199" y="315" width="1" height="3" fill="#ff00ff"/>
<rect x="200" y="315" width="1" height="2" fill="#ff00ff"/>
<rect x="201" y="314" width="1" height="2" fill="#ff00ff"/>
<rect x="202" y="315" width="1" height="2" fill="#ff00ff"/>
<rect x="203" y="314" width="1" height="2" fill="#ff00ff"/>
<rect x="204" y="315" width="1" height="5" fill="#ff00ff"/>
<rect x="205" y="319" width="1" height="5" fill="#ff00ff"/>
<rect x="206" y="323" width="1" height="4" fill="#ff00ff"/>
<rect x="207" y="326" width="1" height="3" fill="#ff00ff"/>
<rect x="208" y="324" width="1" height="3" fill="#ff00ff"/>
<rect x="209" y="326" width="1" height="2" fill="#ff00ff"/>
<rect x="210" y="324" width="1" height="3" fill="#ff00ff"/>
<rect x="211" y="326" width="1" height="2" fill="#ff00ff"/>
<rect x="212" y="325" width="1" height="3" fill="#ff00ff"/>
<rect x="213" y="327" width="1" height="2" fill="#ff00ff"/>
<rect x="214" y="325" width="1" height="3" fill="#ff00ff"/>
<rect x="215" y="325" width="1" height="3" fill="#ff00ff"/>
<rect x="216" y="327" width="1" height="2" fill="#ff00ff"/>
<rect x="217" y="325" width="1" height="3" fill="#ff00ff"/>
<rect x="218" y="325" width="1" height="3" fill="#ff00ff"/>
<rect x="219" y="326" width="1" height="3" fill="#ff00ff"/>
<rect x="220" y="324" width="1" height="3" fill="#ff00ff"/>
<rect x="221" y="325" width="1" height="2" fill="#ff00ff"/>
<rect x="222" y="325" width="1" height="2" fill="#ff00ff"/>
<rect x="223" y="326" width="1" height="2" fill="#ff00ff"/>
<rect x="224" y="324" width="1" height="3" fill="#ff00ff"/>
<rect x="225" y="326" width="1" height="3" fill="#ff00ff"/>
<rect x="226" y="326" width="1" height="3" fill="#ff00ff"/>
<rect x="227" y="324" width="1" height="3" fill="#ff00ff"/>
<rect x="228" y="326" width="1" height="2" fill="#ff00ff"/>
<rect x="229" y="325" width="1" height="3" fill="#ff00ff"/>
<rect x="230" y="327" width="1" height="2" fill="#ff00ff"/>
<rect x="231" y="325" width="1" height="3" fill="#ff00ff"/>
<rect x="232" y="327" width="1" height="2" fill="#ff00ff"/>
<rect x="233" y="327" width="1" height="2" fill="#ff00ff"/>
<rect x="234" y="326" width="1" height="2" fill="#ff00ff"/>
<rect x="235" y="324" width="1" height="3" fill="#ff00ff"/>
<rect x="236" y="326" width="1" height="2" fill="#ff00ff"/>
<rect x="237" y="324" width="1" height="3" fill="#ff00ff"/>
<rect x="238" y="326" width="1" height="2" fill="#ff00ff"/>
<rect x="239" y="324" width="1" height="3" fill="#ff00ff"/>
<rect x="240" y="326" width="1" height="2" fill="#ff00ff"/>
<rect x="241" y="325" width="1" height="3" fill="#ff00ff"/>
<rect x="242" y="326" width="1" height="3" fill="#ff00ff"/>
<rect x="243" y="324" width="1" height="3" fill="#ff00ff"/>
<rect x="244" y="325" width="1" height="2" fill="#ff00ff"/>
<rect x="245" y="324" width="1" height="3" fill="#ff00ff"/>
<rect x="246" y="326" width="1" height="2" fill="#ff00ff"/>
<rect x="247" y="325" width="1" height="2" fill="#ff00ff"/>
<rect x="248" y="326" width="1" height="2" fill="#ff00ff"/>
<rect x="249" y="325" width="1" height="2" fill="#ff00ff"/>
<rect x="250" y="326" width="1" height="2" fill="#ff00ff"/>
<rect x="251" y="326" width="1" height="2" fill="#ff00ff"/>
<rect x="252" y="325" width="1" height="2" fill="#ff00ff"/>
<rect x="253" y="324" width="1" height="2" fill="#ff00ff"/>
<rect x="254" y="325" width="1" height="3" fill="#ff00ff"/>
<rect x="255" y="326" width="1" height="2" fill="#ff00ff"/>
<rect x="256" y="325" width="1" height="2" fill="#ff00ff"/>
<rect x="257" y="324" width="1" height="2" fill="#ff00ff"/>
<rect x="258" y="325" width="1" height="2" fill="#ff00ff"/>
<rect x="259" y="324" width="1" height="3" fill="#ff00ff"/>
<rect x="260" y="325" width="1" height="3" fill="#ff00ff"/>
<rect x="261" y="323" width="1" height="4" fill="#ff00ff"/>
<rect x="262" y="326" width="1" height="3" fill="#ff00ff"/>
<rect x="263" y="325" width="1" height="3" fill="#ff00ff"/>
<rect x="264" y="326" width="1" height="2" fill="#ff00ff"/>
<rect x="265" y="325" width="1" height="2" fill="#ff00ff"/>
<rect x="266" y="325" width="1" height="2" fill="#ff00ff"/>
<rect x="267" y="325" width="1" height="2" fill="#ff00ff"/>
<rect x="268" y="324" width="1" height="3" fill="#ff00ff"/>
<rect x="269" y="326" width="1" height="2" fill="#ff00ff"/>
<rect x="270" y="326" width="1" height="2" fill="#ff00ff"/>
<rect x="271" y="325" width="1" height="2" fill="#ff00ff"/>
<rect x="272" y="326" width="1" height="3" fill="#ff00ff"/>
<rect x="273" y="326" width="1" height="3" fill="#ff00ff"/>
<rect x="274" y="324" width="1" height="3" fill="#ff00ff"/>
<rect x="275" y="324" width="1" height="3" fill="#ff00ff"/>
<rect x="276" y="326" width="1" height="3" fill="#ff00ff"/>
<rect x="277" y="326" width="1" height="2" fill="#ff00ff"/>
<rect x="278" y="325" width="1" height="2" fill="#ff00ff"/>
<rect x="279" y="325" width="1" height="2" fill="#ff00ff"/>
<rect x="280" y="324" width="1" height="3" fill="#ff00ff"/>
<rect x="281" y="326" width="1" height="2" fill="#ff00ff"/>
<rect x="282" y="326" width="1" height="2" fill="#ff00ff"/>
<rect x="283" y="324" width="1" height="3" fill="#ff00ff"/>
<rect x="284" y="326" width="1" height="3" fill="#ff00ff"/>
<rect x="285" y="325" width="1" height="3" fill="#ff00ff"/>
<rect x="286" y="325" width="1" height="2" fill="#ff00ff"/>
<rect x="287" y="325" width="1" height="2" fill="#ff00ff"/>
<rect x="288" y="325" width="1" height="2" fill="#ff00ff"/>
<rect x="289" y="324" width="1" height="2" fill="#ff00ff"/>
<rect x="290" y="324" width="1" height="2" fill="#ff00ff"/>
<rect x="291" y="324" width="1" height="3" fill="#ff00ff"/>
<rect x="292" y="326" width="1" height="2" fill="#ff00ff"/>
<rect x="293" y="326" width="1" height="2" fill="#ff00ff"/>
<rect x="294" y="326" width="1" height="2" fill="#ff00ff"/>
<rect x="295" y="326" width="1" height="3" fill="#ff00ff"/>
<rect x="296" y="324" width="1" height="3" fill="#ff00ff"/>
<rect x="297" y="326" width="1" height="3" fill="#ff00ff"/>
<rect x="298" y="324" width="1" height="3" fill="#ff00ff"/>
<rect x="299" y="326" width="1" height="2" fill="#ff00ff"/>
<rect x="300" y="325" width="1" height="3" fill="#ff00ff"/>
<rect x="301" y="324" width="1" height="3" fill="#ff00ff"/>
<rect x="302" y="326" width="1" height="3" fill="#ff00ff"/>
<rect x="303" y="327" width="1" height="2" fill="#ff00ff"/>
<rect x="304" y="325" width="1" height="3" fill="#ff00ff"/>
<rect x="305" y="325" width="1" height="3" fill="#ff00ff"/>
<rect x="306" y="327" width="1" height="2" fill="#ff00ff"/>
<rect x="307" y="325" width="1" height="3" fill="#ff00ff"/>
<rect x="308" y="326" width="1" height="3" fill="#ff00ff"/>
<rect x="309" y="324" width="1" height="3" fill="#ff00ff"/>
<rect x="310" y="326" width="1" height="3" fill="#ff00ff"/>
<rect x="311" y="327" width="1" height="2" fill="#ff00ff"/>
<rect x="312" y="325" width="1" height="3" fill="#ff00ff"/>
<rect x="313" y="326" width="1" height="2" fill="#ff00ff"/>
<rect x="314" y="325" width="1" height="3" fill="#ff00ff"/>
<rect x="315" y="326" width="1" height="3" fill="#ff00ff"/>
<rect x="316" y="324" width="1" height="3" fill="#ff00ff"/>
<rect x="317" y="326" width="1" height="2" fill="#ff00ff"/>
<rect x="318" y="325" width="1" height="3" fill="#ff00ff"/>
<rect x="319" y="327" width="1" height="2" fill="#ff00ff"/>
<rect x="320" y="325" width="1" height="3" fill="#ff00ff"/>
<rect x="321" y="326" width="1" height="2" fill="#ff00ff"/>
<rect x="322" y="324" width="1" height="3" fill="#ff00ff"/>
<rect x="323" y="326" width="1" height="3" fill="#ff00ff"/>
<rect x="324" y="326" width="1" height="2" fill="#ff00ff"/>
<rect x="325" y="325" width="1" height="3" fill="#ff00ff"/>
<rect x="326" y="327" width="1" height="2" fill="#ff00ff"/>
<rect x="327" y="326" width="1" height="3" fill="#ff00ff"/>
<rect x="328" y="324" width="1" height="3" fill="#ff00ff"/>
<rect x="329" y="326" width="1" height="3" fill="#ff00ff"/>
<rect x="330" y="326" width="1" height="2" fill="#ff00ff"/>
<rect x="331" y="327" width="1" height="2" fill="#ff00ff"/>
<rect x="332" y="326" width="1" height="2" fill="#ff00ff"/>
<rect x="333" y="326" width="1" height="2" fill="#ff00ff"/>
<rect x="334" y="325" width="1" height="2" fill="#ff00ff"/>
<rect x="335" y="326" width="1" height="2" fill="#ff00ff"/>
<rect x="336" y="324" width="1" height="3" fill="#ff00ff"/>
<rect x="337" y="326" width="1" height="2" fill="#ff00ff"/>
<rect x="338" y="325" width="1" height="2" fill="#ff00ff"/>
<rect x="339" y="326" width="1" height="3" fill="#ff00ff"/>
<rect x="340" y="327" width="1" height="2" fill="#ff00ff"/>
<rect x="341" y="325" width="1" height="3" fill="#ff00ff"/>
<rect x="342" y="327" width="1" height="2" fill="#ff00ff"/>
<rect x="343" y="327" width="1" height="2" fill="#ff00ff"/>
<rect x="344" y="325" width="1" height="4" fill="#ff00ff"/>
<rect x="345" y="328" width="1" height="3" fill="#ff00ff"/>
<rect x="346" y="326" width="1" height="3" fill="#ff00ff"/>
<rect x="347" y="327" width="1" height="2" fill="#ff00ff"/>
<rect x="348" y="326" width="1" height="2" fill="#ff00ff"/>
<rect x="349" y="326" width="1" height="1" fill="#ff00ff"/>
<rect x="350" y="325" width="1" height="3" fill="#ff00ff"/>
<rect x="351" y="327" width="1" height="2" fill="#ff00ff"/>
<rect x="352" y="327" width="1" height="2" fill="#ff00ff"/>
<rect x="353" y="325" width="1" height="3" fill="#ff00ff"/>
<rect x="354" y="327" width="1" height="2" fill="#ff00ff"/>
<rect x="355" y="326" width="1" height="2" fill="#ff00ff"/>
<rect x="356" y="327" width="1" height="2" fill="#ff00ff"/>
<rect x="357" y="325" width="1" height="3" fill="#ff00ff"/>
<rect x="358" y="327" width="1" height="2" fill="#ff00ff"/>
<rect x="359" y="325" width="1" height="3" fill="#ff00ff"/>
<rect x="360" y="327" width="1" height="2" fill="#ff00ff"/>
<rect x="361" y="326" width="1" height="2" fill="#ff00ff"/>
<rect x="362" y="327" width="1" height="2" fill="#ff00ff"/>
<rect x="363" y="327" width="1" height="2" fill="#ff00ff"/>
<rect x="364" y="327" width="1" height="2" fill="#ff00ff"/>
<rect x="365" y="326" width="1" height="2" fill="#ff00ff"/>
<rect x="366" y="327" width="1" height="2" fill="#ff00ff"/>
<rect x="367" y="327" width="1" height="2" fill="#ff00ff"/>
<rect x="368" y="327" width="1" height="2" fill="#ff00ff"/>
<rect x="369" y="326" width="1" height="2" fill="#ff00ff"/>
<rect x="370" y="327" width="1" height="2" fill="#ff00ff"/>
<rect x="371" y="325" width="1" height="3" fill="#ff00ff"/>
<rect x="372" y="325" width="1" height="2" fill="#ff00ff"/>
<rect x="373" y="326" width="1" height="3" fill="#ff00ff"/>
<rect x="374" y="328" width="1" height="2" fill="#ff00ff"/>
<rect x="375" y="326" width="1" height="3" fill="#ff00ff"/>
<rect x="376" y="327" width="1" height="2" fill="#ff00ff"/>
<rect x="377" y="326" width="1" height="2" fill="#ff00ff"/>
<rect x="378" y="326" width="1" height="2" fill="#ff00ff"/>
<rect x="379" y="327" width="1" height="2" fill="#ff00ff"/>
<rect x="380" y="328" width="1" height="2" fill="#ff00ff"/>
<rect x="381" y="326" width="1" height="3" fill="#ff00ff"/>
<rect x="382" y="327" width="1" height="2" fill="#ff00ff"/>
<rect x="383" y="328" width="1" height="2" fill="#ff00ff"/>
<rect x="384" y="326" width="1" height="3" fill="#ff00ff"/>
<rect x="385" y="328" width="1" height="2" fill="#ff00ff"/>
<rect x="386" y="329" width="1" height="1" fill="#ff00ff"/>
<rect x="387" y="328" width="1" height="2" fill="#ff00ff"/>
<rect x="388" y="327" width="1" height="2" fill="#ff00ff"/>
<rect x="389" y="327" width="1" height="2" fill="#ff00ff"/>
<rect x="390" y="326" width="1" height="3" fill="#ff00ff"/>
<rect x="391" y="328" width="1" height="3" fill="#ff00ff"/>
<rect x="392" y="326" width="1" height="3" fill="#ff00ff"/>
<rect x="393" y="328" width="1" height="2" fill="#ff00ff"/>
<rect x="394" y="326" width="1" height="3" fill="#ff00ff"/>
<rect x="395" y="328" width="1" height="3" fill="#ff00ff"/>
<rect x="396" y="327" width="1" height="3" fill="#ff00ff"/>
<rect x="397" y="328" width="1" height="2" fill="#ff00ff"/>
<rect x="398" y="326" width="1" height="3" fill="#ff00ff"/>
<rect x="399" y="328" width="1" height="3" fill="#ff00ff"/>
<rect x="400" y="327" width="1" height="3" fill="#ff00ff"/>
<rect x="401" y="326" width="1" height="2" fill="#ff00ff"/>
<rect x="402" y="327" width="1" height="2" fill="#ff00ff"/>
<rect x="403" y="327" width="1" height="3" fill="#ff00ff"/>
<rect x="404" y="328" width="1" height="3" fill="#ff00ff"/>
<rect x="405" y="325" width="1" height="4" fill="#ff00ff"/>
<rect x="406" y="328" width="1" height="3" fill="#ff00ff"/>
<rect x="407" y="327" width="1" height="3" fill="#ff00ff"/>
<rect x="408" y="328" width="1" height="2" fill="#ff00ff"/>
<rect x="409" y="327" width="1" height="2" fill="#ff00ff"/>
<rect x="410" y="328" width="1" height="2" fill="#ff00ff"/>
<rect x="411" y="327" width="1" height="2" fill="#ff00ff"/>
<rect x="412" y="328" width="1" height="2" fill="#ff00ff"/>
<rect x="413" y="327" width="1" height="2" fill="#ff00ff"/>
<rect x="414" y="328" width="1" height="2" fill="#ff00ff"/>
<rect x="415" y="328" width="1" height="2" fill="#ff00ff"/>
<rect x="416" y="329" width="1" height="2" fill="#ff00ff"/>
<rect x="417" y="328" width="1" height="2" fill="#ff00ff"/>
<rect x="418" y="329" width="1" height="2" fill="#ff00ff"/>
<rect x="419" y="327" width="1" height="4" fill="#ff00ff"/>
<rect x="420" y="330" width="1" height="3" fill="#ff00ff"/>
<rect x="421" y="327" width="1" height="4" fill="#ff00ff"/>
<rect x="422" y="329" width="1" height="2" fill="#ff00ff"/>
<rect x="423" y="328" width="1" height="2" fill="#ff00ff"/>
<rect x="424" y="329" width="1" height="2" fill="#ff00ff"/>
<rect x="425" y="329" width="1" height="2" fill="#ff00ff"/>
<rect x="426" y="327" width="1" height="3" fill="#ff00ff"/>
<rect x="427" y="328" width="1" height="3" fill="#ff00ff"/>
<rect x="428" y="326" width="1" height="3" fill="#ff00ff"/>
<rect x="429" y="328" width="1" height="3" fill="#ff00ff"/>
<rect x="430" y="330" width="1" height="1" fill="#ff00ff"/>
<rect x="431" y="329" width="1" height="2" fill="#ff00ff"/>
<rect x="432" y="330" width="1" height="2" fill="#ff00ff"/>
<rect x="433" y="328" width="1" height="3" fill="#ff00ff"/>
<rect x="434" y="328" width="1" height="3" fill="#ff00ff"/>
<rect x="435" y="330" width="1" height="2" fill="#ff00ff"/>
<rect x="436" y="330" width="1" height="2" fill="#ff00ff"/>
<rect x="437" y="329" width="1" height="2" fill="#ff00ff"/>
<rect x="438" y="329" width="1" height="3" fill="#ff00ff"/>
<rect x="439" y="331" width="1" height="2" fill="#ff00ff"/>
<rect x="440" y="329" width="1" height="3" fill="#ff00ff"/>
<rect x="441" y="330" width="1" height="2" fill="#ff00ff"/>
<rect x="442" y="329" width="1" height="3" fill="#ff00ff"/>
<rect x="443" y="331" width="1" height="2" fill="#ff00ff"/>
<rect x="444" y="330" width="1" height="3" fill="#ff00ff"/>
<rect x="445" y="328" width="1" height="3" fill="#ff00ff"/>
<rect x="446" y="329" width="1" height="2" fill="#ff00ff"/>
<rect x="447" y="329" width="1" height="2" fill="#ff00ff"/>
<rect x="448" y="328" width="1" height="3" fill="#ff00ff"/>
<rect x="449" y="329" width="1" height="3" fill="#ff00ff"/>
<rect x="450" y="326" width="1" height="4" fill="#ff00ff"/>
<rect x="451" y="327" width="1" height="2" fill="#ff00ff"/>
<rect x="452" y="325" width="1" height="3" fill="#ff00ff"/>
<rect x="453" y="301" width="1" height="134" fill="#d4d0d0"/>
</svg>
<div class="al" style="right:604.0px;top:400.8px">2</div>
<div class="al" style="right:604.0px;top:373.8px">4</div>
<div class="al" style="right:604.0px;top:347.8px">6</div>
<div class="al" style="right:604.0px;top:320.8px">8</div>
<div class="al" style="right:604.0px;top:293.8px">10</div>
<div class="al" style="left:470.2px;top:400.8px">2</div>
<div class="al" style="left:470.2px;top:373.8px">4</div>
<div class="al" style="left:470.2px;top:347.8px">6</div>
<div class="al" style="left:470.2px;top:320.8px">8</div>
<div class="al" style="left:470.2px;top:293.8px">10</div>
<div class="al xl" style="left:34.3px;top:437.6px">0.0</div>
<div class="al xl" style="left:80.7px;top:437.6px">0.5</div>
<div class="al xl" style="left:127.2px;top:437.6px">1.0</div>
<div class="al xl" style="left:173.6px;top:437.6px">1.5</div>
<div class="al xl" style="left:220.1px;top:437.6px">2.0</div>
<div class="al xl" style="left:266.5px;top:437.6px">2.5</div>
<div class="al xl" style="left:313.0px;top:437.6px">3.0</div>
<div class="al xl" style="left:359.4px;top:437.6px">3.5</div>
<div class="al xl" style="left:405.9px;top:437.6px">4.0</div>
<div class="al xl" style="left:452.3px;top:437.6px">4.5</div>

<div class="gb" style="left:491px;top:133px;width:140px;height:83px"></div>
<div class="abs" style="left:498px;top:132px;width:45px;height:3px;background:#fbfbfc"></div>
<div class="gb" style="left:491px;top:224px;width:140px;height:204px"></div>
<div class="abs" style="left:498px;top:223px;width:43px;height:3px;background:#f9f9f9"></div>
<div class="gb" style="left:491px;top:433px;width:140px;height:27px"></div>
<div class="gb" style="left:491px;top:465px;width:140px;height:57px"></div>
<div class="edit" style="left:500px;top:233px;width:84px;height:21px"></div>
<div class="dd" style="left:567px;top:235px;width:15px;height:17px"><svg width="13" height="15" viewBox="0 0 13 15" style="position:absolute;left:0;top:0"><path d="M2.5 6 L6.5 10 L10.5 6" fill="none" stroke="#4d6185" stroke-width="2"/></svg></div>
<div class="abs" style="left:592px;top:232px;width:23px;height:23px;box-sizing:border-box;border:1px solid;border-color:#fff #716f64 #716f64 #fff;background:#ece9d8"><div style="position:absolute;left:0;top:0;right:0;bottom:0;border:1px solid;border-color:#f1efe2 #aca899 #aca899 #f1efe2"></div><svg style="position:absolute;left:3px;top:2px" width="15" height="16" viewBox="0 0 15 16"><rect x="0.5" y="0.5" width="14" height="15" fill="#fff" stroke="#000"/><path d="M3.7 8 V5.6 Q3.7 3.9 5.4 3.9 H7" fill="none" stroke="#0a8a0a" stroke-width="1.6" stroke-dasharray="2.4 0.5"/><path d="M6.8 1.6 L9.8 3.9 L6.8 6.3 Z" fill="#0a8a0a"/><path d="M11.3 7.6 V10.4 Q11.3 12.1 9.6 12.1 H8" fill="none" stroke="#0a8a0a" stroke-width="1.6" stroke-dasharray="2.4 0.5"/><path d="M8.2 9.7 L5.2 12.1 L8.2 14.5 Z" fill="#0a8a0a"/></svg></div>
<div class="edit" style="left:554px;top:259px;width:60px;height:20px"></div>
<div class="edit" style="left:554px;top:282px;width:60px;height:20px"></div>
<div class="chk" style="left:502px;top:304px;border-color:#1c5180;background:linear-gradient(135deg,#dcdcd7 0,#f0f0ec 50%,#fff 100%)"></div>
<div class="chk" style="left:502px;top:322px;border-color:#1c5180;background:linear-gradient(135deg,#dcdcd7 0,#f0f0ec 50%,#fff 100%)"></div>
<svg class="abs" style="left:502px;top:322px" width="13" height="13" viewBox="0 0 13 13"><path d="M3 5.2 L5.2 7.6 L10 2.8 L10 5.6 L5.2 10.4 L3 8 Z" fill="#21a121"/></svg>
<div class="chk" style="left:502px;top:337px;border-color:#1c5180;background:linear-gradient(135deg,#dcdcd7 0,#f0f0ec 50%,#fff 100%)"></div>
<svg class="abs" style="left:502px;top:337px" width="13" height="13" viewBox="0 0 13 13"><path d="M3 5.2 L5.2 7.6 L10 2.8 L10 5.6 L5.2 10.4 L3 8 Z" fill="#21a121"/></svg>
<div class="chk" style="left:502px;top:353px;border-color:#1c5180;background:linear-gradient(135deg,#dcdcd7 0,#f0f0ec 50%,#fff 100%)"></div>
<svg class="abs" style="left:502px;top:353px" width="13" height="13" viewBox="0 0 13 13"><path d="M3 5.2 L5.2 7.6 L10 2.8 L10 5.6 L5.2 10.4 L3 8 Z" fill="#21a121"/></svg>
<div class="chk" style="left:502px;top:369px;border-color:#1c5180;background:linear-gradient(135deg,#dcdcd7 0,#f0f0ec 50%,#fff 100%)"></div>
<svg class="abs" style="left:502px;top:369px" width="13" height="13" viewBox="0 0 13 13"><path d="M3 5.2 L5.2 7.6 L10 2.8 L10 5.6 L5.2 10.4 L3 8 Z" fill="#21a121"/></svg>
<div class="chk" style="left:502px;top:384px;border-color:#cac8bb;background:#fff"></div>
<svg class="abs" style="left:502px;top:384px" width="13" height="13" viewBox="0 0 13 13"><path d="M3 5.2 L5.2 7.6 L10 2.8 L10 5.6 L5.2 10.4 L3 8 Z" fill="#cac8bb"/></svg>
<div class="btn" style="left:528px;top:402px;width:96px;height:21px;box-shadow:inset 0 2px 0 #fff0cf,inset 2px 0 0 #fdd889,inset -2px 0 0 #fbc761,inset 0 -2px 0 #e59700"></div>
<div class="gbc" style="left:14px;top:465px;width:146px;height:56px"></div>
<div class="abs" style="left:23px;top:465px;width:54px;height:2px;background:#f5f4ef"></div>
<div class="gbc" style="left:172px;top:465px;width:146px;height:56px"></div>
<div class="abs" style="left:181px;top:465px;width:63px;height:2px;background:#f5f4ef"></div>
<div class="gbc" style="left:331px;top:465px;width:147px;height:42px"></div>
<div class="abs" style="left:340px;top:465px;width:11px;height:2px;background:#f5f4ef"></div>
<div class="abs" style="left:24px;top:462px;width:8px;height:8px;box-sizing:border-box;border:1px solid #000;background:#00ffff"></div>
<div class="abs" style="left:182px;top:462px;width:8px;height:8px;box-sizing:border-box;border:1px solid #000;background:#ffff00"></div>
<div class="abs" style="left:341px;top:462px;width:8px;height:8px;box-sizing:border-box;border:1px solid #000;background:#ff00ff"></div>
<div class="t" style="top:33px;left:8.4px;letter-spacing:-0.06px;">File</div>
<div class="t" style="top:33px;left:36.9px;letter-spacing:0.16px;">Run Test</div>
<div class="t" style="top:33px;left:91.9px;letter-spacing:0.16px;">Extra</div>
<div class="t" style="top:33px;left:129.9px;letter-spacing:-0.16px;">Help</div>
<div class="t" style="top:66px;left:178.0px;letter-spacing:-0.34px;">[1:0]&nbsp;&nbsp; LITE-ON DVDRW LH-18A1H HL09</div>
<div class="t" style="top:66px;left:498.7px;letter-spacing:0.35px;">Start</div>
<div class="t" style="top:66px;left:583.9px;letter-spacing:-0.09px;">Exit</div>
<div class="t" style="top:105px;left:18.3px;letter-spacing:-0.37px;">Benchmark</div>
<div class="t" style="top:105px;left:83.4px;letter-spacing:-0.20px;">Create Disc</div>
<div class="t" style="top:105px;left:150.7px;letter-spacing:-0.10px;">Disc Info</div>
<div class="t z4" style="top:103px;left:205.0px;letter-spacing:-0.22px;">Disc Quality</div>
<div class="t" style="top:105px;left:272.9px;letter-spacing:-0.10px;">Advanced Disc Quality</div>
<div class="t" style="top:105px;left:392.9px;letter-spacing:-0.11px;">ScanDisc</div>
<div class="t" style="top:105px;left:450.9px;letter-spacing:-0.05px;">TA Jitter</div>
<div class="t gtx" style="top:127px;left:499.8px;letter-spacing:-0.18px;">Disc info</div>
<div class="t" style="top:141px;left:499.4px;letter-spacing:-0.12px;">Type:</div>
<div class="t" style="top:159px;left:499.4px;letter-spacing:-0.25px;">ID:</div>
<div class="t" style="top:177px;left:499.4px;letter-spacing:-0.12px;">Date:</div>
<div class="t" style="top:195px;left:499.4px;letter-spacing:-0.18px;">Label:</div>
<div class="t v" style="top:141px;left:544.7px;letter-spacing:-0.12px;">DVD+R</div>
<div class="t v" style="top:159px;left:544.7px;letter-spacing:-0.32px;">MCC 004</div>
<div class="t v" style="top:177px;left:544.7px;letter-spacing:-0.08px;">6 Jan 2008</div>
<div class="t v" style="top:195px;left:544.7px;letter-spacing:-0.21px;">DVD</div>
<div class="t gtx" style="top:218px;left:499.8px;letter-spacing:-0.19px;">Settings</div>
<div class="t" style="top:238px;left:503.8px;letter-spacing:0.19px;">4 X</div>
<div class="t" style="top:264px;left:501.8px;letter-spacing:-0.30px;">Start:</div>
<div class="t" style="top:288px;left:501.8px;letter-spacing:-0.14px;">End:</div>
<div class="t" style="top:262px;left:556.4px;letter-spacing:-0.13px;">0000 MB</div>
<div class="t" style="top:286px;left:556.4px;letter-spacing:-0.13px;">4469 MB</div>
<div class="t" style="top:305px;left:517.2px;letter-spacing:-0.04px;">Quick scan</div>
<div class="t" style="top:322px;left:517.3px;letter-spacing:0.03px;">Show C1/PIE</div>
<div class="t" style="top:337px;left:517.3px;letter-spacing:-0.05px;">Show C2/PIF</div>
<div class="t" style="top:353px;left:517.3px;letter-spacing:-0.14px;">Show jitter</div>
<div class="t" style="top:369px;left:517.3px;letter-spacing:-0.17px;">Show read speed</div>
<div class="t dis" style="top:384px;left:517.3px;letter-spacing:-0.18px;">Show write speed</div>
<div class="t" style="top:407px;left:550.7px;letter-spacing:0.03px;">Advanced</div>
<div class="t" style="top:440px;left:501.3px;letter-spacing:-0.18px;">Quality score:</div>
<div class="t v" style="top:440px;right:23.6px;letter-spacing:0.38px;">95</div>
<div class="t" style="top:474px;left:501.4px;letter-spacing:-0.31px;">Progress:</div>
<div class="t" style="top:490px;left:501.4px;letter-spacing:-0.18px;">Position:</div>
<div class="t" style="top:506px;left:501.4px;letter-spacing:-0.08px;">Speed:</div>
<div class="t v" style="top:474px;right:23.9px;letter-spacing:-0.42px;">100 %</div>
<div class="t v" style="top:490px;right:23.5px;">4468 MB</div>
<div class="t v" style="top:506px;right:23.6px;letter-spacing:-0.05px;">3.96 X</div>
<div class="t" style="top:460px;left:34.7px;letter-spacing:-0.36px;">PI Errors</div>
<div class="t" style="top:476px;left:21.8px;letter-spacing:-0.08px;">Average:</div>
<div class="t" style="top:491px;left:21.8px;letter-spacing:-0.48px;">Maximum:</div>
<div class="t" style="top:506px;left:21.8px;letter-spacing:0.08px;">Total:</div>
<div class="t v" style="top:476px;right:494.5px;">0.82</div>
<div class="t v" style="top:491px;right:494.5px;">8</div>
<div class="t v" style="top:506px;right:494.6px;letter-spacing:-0.10px;">14671</div>
<div class="t" style="top:460px;left:192.9px;letter-spacing:-0.33px;">PI Failures</div>
<div class="t" style="top:476px;left:180.4px;letter-spacing:-0.08px;">Average:</div>
<div class="t" style="top:491px;left:180.4px;letter-spacing:-0.48px;">Maximum:</div>
<div class="t" style="top:506px;left:180.4px;letter-spacing:0.08px;">Total:</div>
<div class="t v" style="top:476px;right:335.4px;letter-spacing:0.07px;">0.00</div>
<div class="t v" style="top:491px;right:335.5px;">2</div>
<div class="t v" style="top:506px;right:335.4px;letter-spacing:0.12px;">50</div>
<div class="t" style="top:460px;left:351.2px;letter-spacing:-0.21px;">Jitter</div>
<div class="t" style="top:476px;left:339.8px;letter-spacing:-0.08px;">Average:</div>
<div class="t" style="top:491px;left:339.8px;letter-spacing:-0.48px;">Maximum:</div>
<div class="t v" style="top:476px;right:176.2px;letter-spacing:-0.12px;">8.17 %</div>
<div class="t v" style="top:491px;right:176.3px;letter-spacing:-0.03px;">9.3 %</div>
<div class="t" style="top:509px;left:339.8px;letter-spacing:-0.31px;">PO failures:</div>
<div class="t" style="top:509px;right:175.5px;">-</div>
</body></html>
